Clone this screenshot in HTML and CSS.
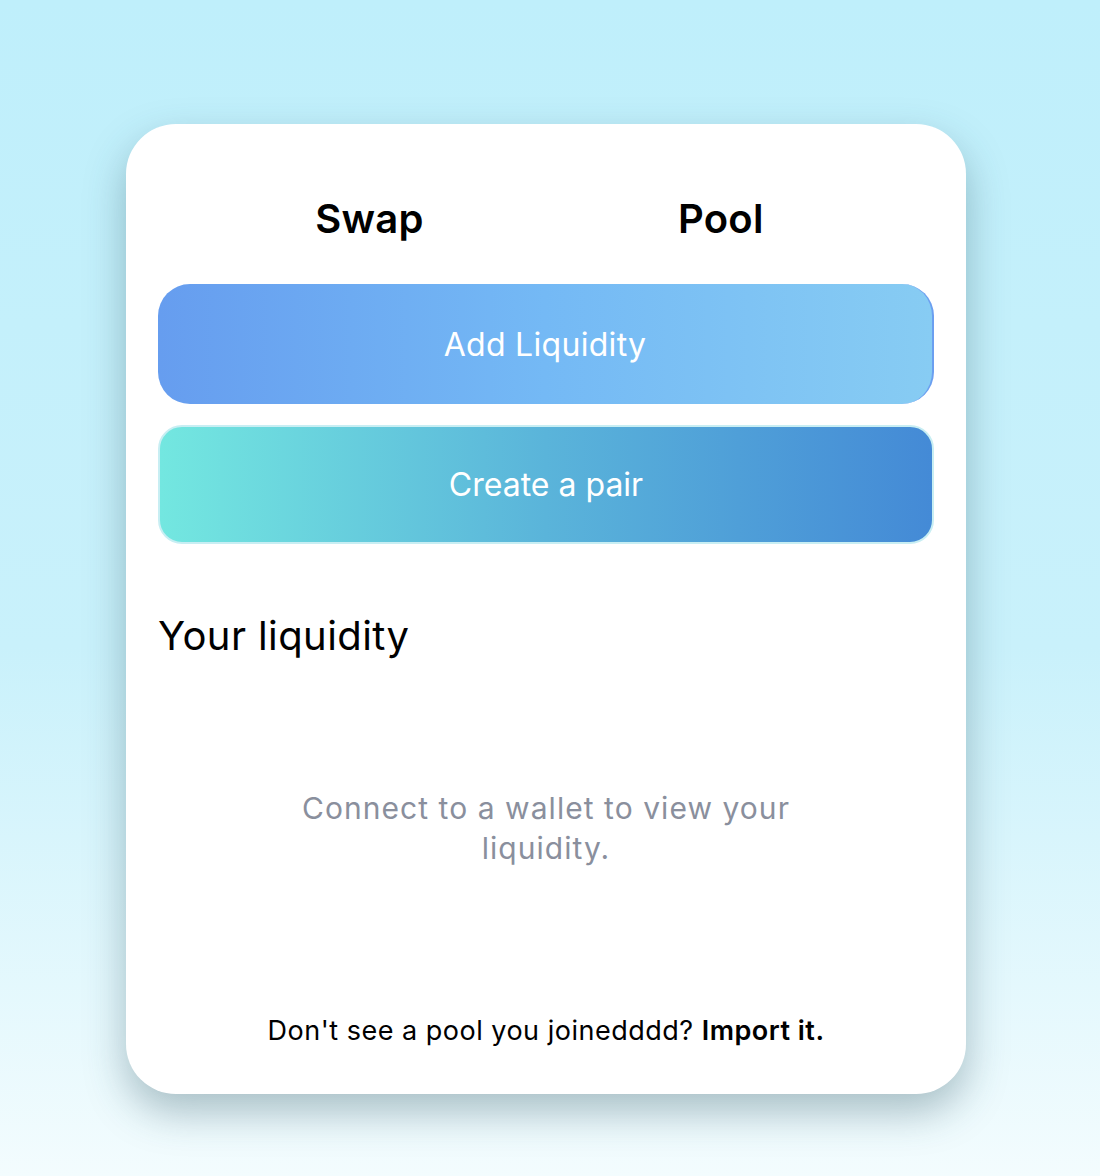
FILE: index.html
```html
<!DOCTYPE html>
<html lang="en">
<head>
<meta charset="utf-8">
<title>Pool</title>
<link rel="stylesheet" href="styles.css">
</head>
<body>
<main class="page">
  <section class="card">
    <nav class="tabs">
      <span class="tab">Swap</span>
      <span class="tab">Pool</span>
    </nav>
    <button class="btn btn-add">Add Liquidity</button>
    <button class="btn btn-create">Create a pair</button>
    <h2 class="title">Your liquidity</h2>
    <p class="empty">Connect to a wallet to view your<br>liquidity.</p>
    <p class="footer">Don't see a pool you joinedddd? <a class="import">Import it.</a></p>
  </section>
</main>
</body>
</html>
```

FILE: styles.css
```css
html, body {
  margin: 0;
  padding: 0;
}
body {
  width: 1100px;
  height: 1176px;
  background: linear-gradient(180deg, #bfeffb 0%, #c9f1fb 55%, #f3fcfe 100%);
  font-family: Inter, "Noto Sans", sans-serif;
  overflow: hidden;
}
.page {
  padding: 124px 0 0 126px;
}
.card {
  box-sizing: border-box;
  width: 840px;
  height: 970px;
  background: #fff;
  border-radius: 50px;
  box-shadow: 0 18px 40px rgba(40, 80, 95, 0.35);
  padding: 0 32px;
  display: flex;
  flex-direction: column;
}
.tabs {
  display: flex;
  justify-content: center;
  gap: 254px;
  padding: 72px 13px 0 0;
  height: 88px;
  box-sizing: content-box;
}
.tab {
  font-size: 40px;
  font-weight: 600;
  letter-spacing: 0.3px;
  color: #000;
  line-height: 46px;
}
.btn {
  box-sizing: border-box;
  width: 776px;
  border: none;
  color: #fff;
  font-family: Inter, "Noto Sans", sans-serif;
  font-size: 32px;
  font-weight: 400;
  padding: 0;
}
.btn-add {
  height: 120px;
  border-radius: 32px;
  letter-spacing: 0.3px;
  background: linear-gradient(90deg, #669def 0%, #74b9f5 50%, #87ccf3 100%);
  border-right: 2px solid #6b9ff0;
}
.btn-create {
  margin-top: 21px;
  height: 119px;
  border-radius: 24px;
  border: 2px solid #c8eef3;
  background: linear-gradient(90deg, #73e7e0 0%, #5ab4da 50%, #448ad6 100%);
}
.title {
  margin: 68px 0 0 0;
  font-size: 40px;
  font-weight: 400;
  letter-spacing: 0.4px;
  color: #000;
  line-height: 48px;
}
.empty {
  margin: 128px 0 0;
  text-align: center;
  font-size: 30px;
  line-height: 40px;
  letter-spacing: 1.05px;
  color: #8a8f9d;
}
.footer {
  margin: 147px 0 0;
  text-align: center;
  font-size: 27px;
  line-height: 32px;
  letter-spacing: 0.5px;
  color: #000;
}
.import {
  font-weight: 600;
}
```
